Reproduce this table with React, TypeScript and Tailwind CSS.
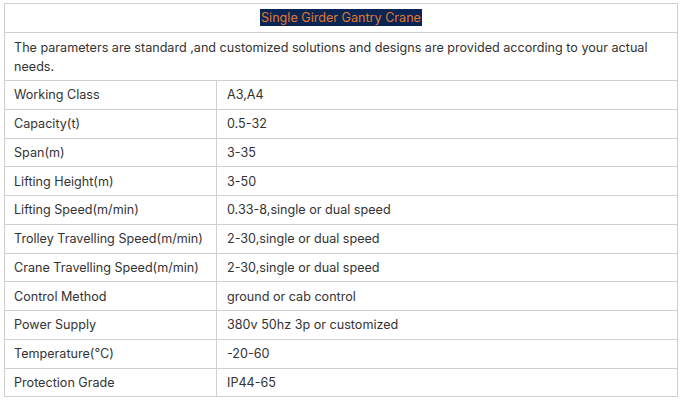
import React from "react";

const rows: [string, string][] = [
  ["Working Class", "A3,A4"],
  ["Capacity(t)", "0.5-32"],
  ["Span(m)", "3-35"],
  ["Lifting Height(m)", "3-50"],
  ["Lifting Speed(m/min)", "0.33-8,single or dual speed"],
  ["Trolley Travelling Speed(m/min)", "2-30,single or dual speed"],
  ["Crane Travelling Speed(m/min)", "2-30,single or dual speed"],
  ["Control Method", "ground or cab control"],
  ["Power Supply", "380v 50hz 3p or customized"],
  ["Temperature(℃)", "-20-60"],
  ["Protection Grade", "IP44-65"],
];

export default function App() {
  return (
    <div className="w-[683px] h-[406px] bg-white pt-[3px] pl-[4px]" style={{ fontFamily: "Inter, 'Noto Sans', sans-serif" }}>
      <table className="w-[674px] border-collapse text-[12.6px] text-[#333333] table-fixed">
        <colgroup>
          <col className="w-[212px]" />
          <col />
        </colgroup>
        <tbody>
          <tr className="h-[29px]">
            <td colSpan={2} className="border border-[#cfcfcf] text-center p-0">
              <span className="bg-[#0a2454] text-[#e3762b] px-[1px] py-[1px]">Single Girder Gantry Crane</span>
            </td>
          </tr>
          <tr className="h-[48px]">
            <td colSpan={2} className="border border-[#cfcfcf] px-[9px] py-0 leading-[19px]">
              The parameters are standard ,and customized solutions and designs are provided according to your actual needs.
            </td>
          </tr>
          {rows.map(([k, v]) => (
            <tr key={k} className="h-[28.75px]">
              <td className="border border-[#cfcfcf] px-[9px] pt-[2px] pb-0 whitespace-nowrap">{k}</td>
              <td className="border border-[#cfcfcf] px-[10px] pt-[2px] pb-0 whitespace-nowrap">{v}</td>
            </tr>
          ))}
        </tbody>
      </table>
    </div>
  );
}
